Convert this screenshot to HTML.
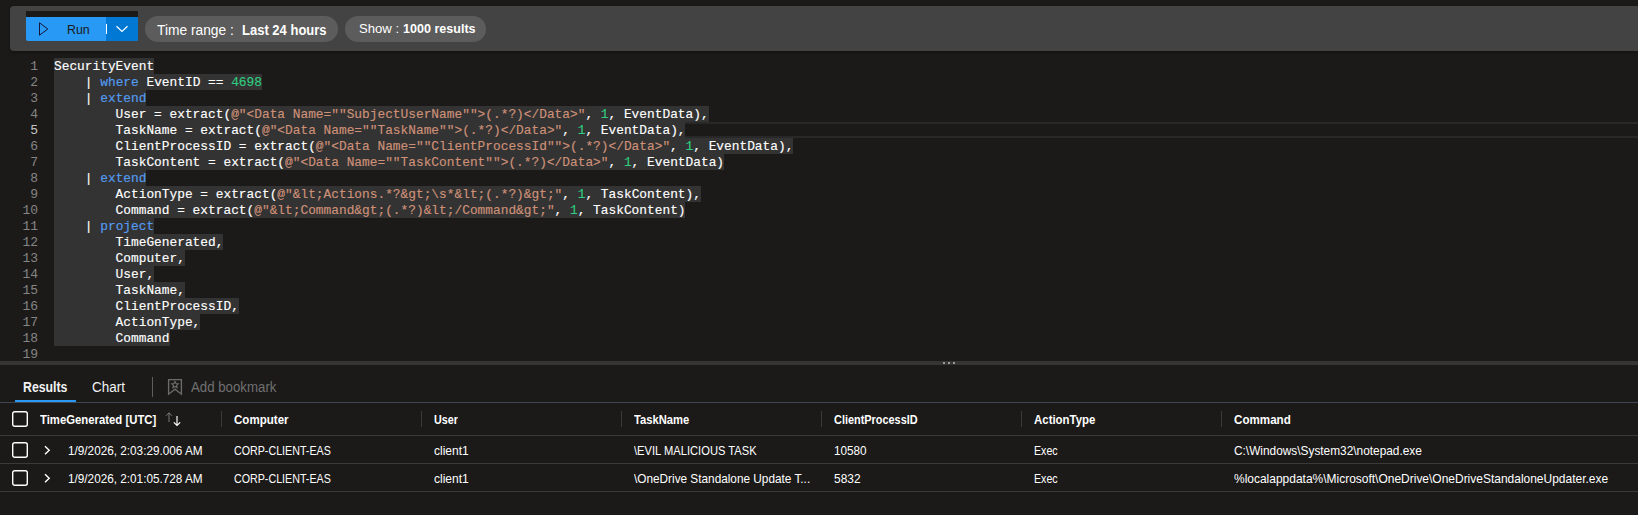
<!DOCTYPE html><html><head><meta charset="utf-8"><style>
html,body{margin:0;padding:0;width:1638px;height:515px;overflow:hidden;background:#1b1a19;}
.t{position:absolute;white-space:pre;line-height:1;font-family:"Liberation Sans",sans-serif;}
.ln{position:absolute;left:0;width:38px;text-align:right;height:16px;line-height:16px;font-family:"Liberation Mono",monospace;font-size:13px;white-space:pre;}
.code{position:absolute;left:54px;height:16px;line-height:16px;font-family:"Liberation Mono",monospace;font-size:13px;white-space:pre;transform:scaleX(0.98718);transform-origin:0 0;-webkit-text-stroke:0.15px currentColor;}
</style></head><body><div style="position:absolute;left:10px;top:6px;width:1628px;height:45px;background:#434343;border-radius:4px 0 0 4px;box-shadow:0 1.5px 3px rgba(0,0,0,0.25);"></div>
<div style="position:absolute;left:26px;top:11px;width:112px;height:6px;background:#1b1a19;"></div>
<div style="position:absolute;left:26px;top:17px;width:112px;height:24px;background:#2899f5;border-radius:0 0 2px 2px;"></div>
<div style="position:absolute;left:106px;top:17px;width:32px;height:24px;background:#0078d4;border-radius:0 0 2px 0;"></div>
<svg style="position:absolute;left:0;top:0" width="160" height="50"><path d="M39.5 22.8 L47.8 29 L39.5 35.2 Z" fill="none" stroke="#15163a" stroke-width="1.0"/><path d="M116.5 26.2 L122 31.5 L127.5 26.2" fill="none" stroke="#fff" stroke-width="1.2"/></svg>
<div style="position:absolute;left:106px;top:24px;width:1px;height:10px;background:#ffffff;"></div>
<div class="t" id="t0" style="left:67.05px;top:23.00px;font-size:13px;font-weight:400;color:#1b1a19;transform:scaleX(0.9545);transform-origin:0 0;">Run</div>
<div style="position:absolute;left:145px;top:16px;width:193px;height:26px;background:#5c5c5c;border-radius:13px;"></div>
<div class="t" id="t1" style="left:157.19px;top:22.95px;font-size:14px;font-weight:400;color:#fff;transform:scaleX(0.9835);transform-origin:0 0;">Time range :</div>
<div class="t" id="t2" style="left:242.06px;top:22.95px;font-size:14px;font-weight:700;color:#fff;transform:scaleX(0.9290);transform-origin:0 0;">Last 24 hours</div>
<div style="position:absolute;left:345px;top:16px;width:141px;height:26px;background:#5c5c5c;border-radius:13px;"></div>
<div class="t" id="t3" style="left:359.40px;top:22.30px;font-size:13px;font-weight:400;color:#fff;transform:scaleX(1.0078);transform-origin:0 0;">Show :</div>
<div class="t" id="t4" style="left:403.40px;top:22.30px;font-size:13px;font-weight:700;color:#fff;transform:scaleX(0.9653);transform-origin:0 0;">1000 results</div>
<div style="position:absolute;left:54px;top:122px;width:1584px;height:16px;background:transparent;box-sizing:border-box;border-top:2px solid #282828;border-bottom:2px solid #282828;"></div>
<div style="position:absolute;left:54px;top:58px;width:100.1px;height:16px;background:#333333;"></div>
<div style="position:absolute;left:54px;top:74px;width:207.9px;height:16px;background:#333333;"></div>
<div style="position:absolute;left:54px;top:90px;width:92.4px;height:16px;background:#333333;"></div>
<div style="position:absolute;left:54px;top:106px;width:654.5px;height:16px;background:#333333;"></div>
<div style="position:absolute;left:54px;top:122px;width:631.4px;height:16px;background:#333333;"></div>
<div style="position:absolute;left:54px;top:138px;width:739.2px;height:16px;background:#333333;"></div>
<div style="position:absolute;left:54px;top:154px;width:669.9px;height:16px;background:#333333;"></div>
<div style="position:absolute;left:54px;top:170px;width:92.4px;height:16px;background:#333333;"></div>
<div style="position:absolute;left:54px;top:186px;width:646.8px;height:16px;background:#333333;"></div>
<div style="position:absolute;left:54px;top:202px;width:631.4px;height:16px;background:#333333;"></div>
<div style="position:absolute;left:54px;top:218px;width:100.1px;height:16px;background:#333333;"></div>
<div style="position:absolute;left:54px;top:234px;width:169.4px;height:16px;background:#333333;"></div>
<div style="position:absolute;left:54px;top:250px;width:130.9px;height:16px;background:#333333;"></div>
<div style="position:absolute;left:54px;top:266px;width:100.1px;height:16px;background:#333333;"></div>
<div style="position:absolute;left:54px;top:282px;width:130.9px;height:16px;background:#333333;"></div>
<div style="position:absolute;left:54px;top:298px;width:184.8px;height:16px;background:#333333;"></div>
<div style="position:absolute;left:54px;top:314px;width:146.3px;height:16px;background:#333333;"></div>
<div style="position:absolute;left:54px;top:330px;width:115.5px;height:16px;background:#333333;"></div>
<div class="ln" style="top:59px;color:#858585">1</div>
<div class="code" style="top:59px"><span style="color:#ffffff">SecurityEvent</span></div>
<div class="ln" style="top:75px;color:#858585">2</div>
<div class="code" style="top:75px"><span style="color:#ffffff">    </span><span style="color:#ffffff">| </span><span style="color:#539cf2">where</span><span style="color:#ffffff"> EventID == </span><span style="color:#2fcd7f">4698</span></div>
<div class="ln" style="top:91px;color:#858585">3</div>
<div class="code" style="top:91px"><span style="color:#ffffff">    </span><span style="color:#ffffff">| </span><span style="color:#539cf2">extend</span></div>
<div class="ln" style="top:107px;color:#858585">4</div>
<div class="code" style="top:107px"><span style="color:#ffffff">        User = extract(</span><span style="color:#ce9178">@&quot;&lt;Data Name=&quot;&quot;SubjectUserName&quot;&quot;&gt;(.*?)&lt;/Data&gt;&quot;</span><span style="color:#ffffff">, </span><span style="color:#2fcd7f">1</span><span style="color:#ffffff">, EventData),</span></div>
<div class="ln" style="top:123px;color:#c6c6c6">5</div>
<div class="code" style="top:123px"><span style="color:#ffffff">        TaskName = extract(</span><span style="color:#ce9178">@&quot;&lt;Data Name=&quot;&quot;TaskName&quot;&quot;&gt;(.*?)&lt;/Data&gt;&quot;</span><span style="color:#ffffff">, </span><span style="color:#2fcd7f">1</span><span style="color:#ffffff">, EventData),</span></div>
<div class="ln" style="top:139px;color:#858585">6</div>
<div class="code" style="top:139px"><span style="color:#ffffff">        ClientProcessID = extract(</span><span style="color:#ce9178">@&quot;&lt;Data Name=&quot;&quot;ClientProcessId&quot;&quot;&gt;(.*?)&lt;/Data&gt;&quot;</span><span style="color:#ffffff">, </span><span style="color:#2fcd7f">1</span><span style="color:#ffffff">, EventData),</span></div>
<div class="ln" style="top:155px;color:#858585">7</div>
<div class="code" style="top:155px"><span style="color:#ffffff">        TaskContent = extract(</span><span style="color:#ce9178">@&quot;&lt;Data Name=&quot;&quot;TaskContent&quot;&quot;&gt;(.*?)&lt;/Data&gt;&quot;</span><span style="color:#ffffff">, </span><span style="color:#2fcd7f">1</span><span style="color:#ffffff">, EventData)</span></div>
<div class="ln" style="top:171px;color:#858585">8</div>
<div class="code" style="top:171px"><span style="color:#ffffff">    </span><span style="color:#ffffff">| </span><span style="color:#539cf2">extend</span></div>
<div class="ln" style="top:187px;color:#858585">9</div>
<div class="code" style="top:187px"><span style="color:#ffffff">        ActionType = extract(</span><span style="color:#ce9178">@&quot;&amp;lt;Actions.*?&amp;gt;\s*&amp;lt;(.*?)&amp;gt;&quot;</span><span style="color:#ffffff">, </span><span style="color:#2fcd7f">1</span><span style="color:#ffffff">, TaskContent),</span></div>
<div class="ln" style="top:203px;color:#858585">10</div>
<div class="code" style="top:203px"><span style="color:#ffffff">        Command = extract(</span><span style="color:#ce9178">@&quot;&amp;lt;Command&amp;gt;(.*?)&amp;lt;/Command&amp;gt;&quot;</span><span style="color:#ffffff">, </span><span style="color:#2fcd7f">1</span><span style="color:#ffffff">, TaskContent)</span></div>
<div class="ln" style="top:219px;color:#858585">11</div>
<div class="code" style="top:219px"><span style="color:#ffffff">    </span><span style="color:#ffffff">| </span><span style="color:#539cf2">project</span></div>
<div class="ln" style="top:235px;color:#858585">12</div>
<div class="code" style="top:235px"><span style="color:#ffffff">        TimeGenerated,</span></div>
<div class="ln" style="top:251px;color:#858585">13</div>
<div class="code" style="top:251px"><span style="color:#ffffff">        Computer,</span></div>
<div class="ln" style="top:267px;color:#858585">14</div>
<div class="code" style="top:267px"><span style="color:#ffffff">        User,</span></div>
<div class="ln" style="top:283px;color:#858585">15</div>
<div class="code" style="top:283px"><span style="color:#ffffff">        TaskName,</span></div>
<div class="ln" style="top:299px;color:#858585">16</div>
<div class="code" style="top:299px"><span style="color:#ffffff">        ClientProcessID,</span></div>
<div class="ln" style="top:315px;color:#858585">17</div>
<div class="code" style="top:315px"><span style="color:#ffffff">        ActionType,</span></div>
<div class="ln" style="top:331px;color:#858585">18</div>
<div class="code" style="top:331px"><span style="color:#ffffff">        Command</span></div>
<div class="ln" style="top:347px;color:#858585">19</div>
<div class="code" style="top:347px"></div>
<div style="position:absolute;left:0px;top:361px;width:1638px;height:4px;background:#353535;"></div>
<div style="position:absolute;left:943px;top:362px;width:2px;height:2px;background:#9a9a9a;"></div>
<div style="position:absolute;left:948px;top:362px;width:2px;height:2px;background:#9a9a9a;"></div>
<div style="position:absolute;left:953px;top:362px;width:2px;height:2px;background:#9a9a9a;"></div>
<div class="t" id="t5" style="left:23.08px;top:379.75px;font-size:14px;font-weight:700;color:#f2f2f2;transform:scaleX(0.8789);transform-origin:0 0;">Results</div>
<div class="t" id="t6" style="left:92.21px;top:379.75px;font-size:14px;font-weight:400;color:#f2f2f2;transform:scaleX(0.9601);transform-origin:0 0;">Chart</div>
<div style="position:absolute;left:152px;top:377px;width:1px;height:20px;background:#5e5e5e;"></div>
<svg style="position:absolute;left:160px;top:372px" width="30" height="30"><path d="M8.6 7.6 H21.4 V22.2 L15 17.2 L8.6 22.2 Z" fill="none" stroke="#6b6b6b" stroke-width="1.35"/><path d="M15 9.4 L16 11.5 L18.3 11.7 L16.6 13.3 L17.1 15.6 L15 14.4 L12.9 15.6 L13.4 13.3 L11.7 11.7 L14 11.5 Z" fill="none" stroke="#6b6b6b" stroke-width="1.15"/></svg>
<div class="t" id="t7" style="left:190.79px;top:379.85px;font-size:14px;font-weight:400;color:#707070;transform:scaleX(0.9463);transform-origin:0 0;">Add bookmark</div>
<div style="position:absolute;left:15px;top:400px;width:61px;height:2px;background:#2899f5;"></div>
<div style="position:absolute;left:0px;top:402px;width:1638px;height:1px;background:#3d4652;"></div>
<svg style="position:absolute;left:12px;top:411px" width="16" height="16"><rect x="0.7" y="0.7" width="14.6" height="14.6" rx="2" fill="none" stroke="#ffffff" stroke-width="1.4"/></svg>
<div class="t" id="t8" style="left:40.00px;top:413.30px;font-size:13px;font-weight:700;color:#fff;transform:scaleX(0.8715);transform-origin:0 0;">TimeGenerated [UTC]</div>
<svg style="position:absolute;left:160px;top:408px" width="26" height="22"><path d="M9 14 V4.8 M6 7.8 L9 4.8 L12 7.8" fill="none" stroke="#8a8a8a" stroke-width="0.85"/><path d="M17 8 V17.5 M13.8 14.3 L17 17.5 L20.2 14.3" fill="none" stroke="#fff" stroke-width="1.15"/></svg>
<div style="position:absolute;left:221px;top:411px;width:1px;height:16px;background:#3a3a3a;"></div>
<div class="t" id="t9" style="left:234.00px;top:413.30px;font-size:13px;font-weight:700;color:#fff;transform:scaleX(0.8889);transform-origin:0 0;">Computer</div>
<div style="position:absolute;left:421px;top:411px;width:1px;height:16px;background:#3a3a3a;"></div>
<div class="t" id="t10" style="left:434.00px;top:413.30px;font-size:13px;font-weight:700;color:#fff;transform:scaleX(0.8276);transform-origin:0 0;">User</div>
<div style="position:absolute;left:621px;top:411px;width:1px;height:16px;background:#3a3a3a;"></div>
<div class="t" id="t11" style="left:634.00px;top:413.30px;font-size:13px;font-weight:700;color:#fff;transform:scaleX(0.8610);transform-origin:0 0;">TaskName</div>
<div style="position:absolute;left:821px;top:411px;width:1px;height:16px;background:#3a3a3a;"></div>
<div class="t" id="t12" style="left:834.00px;top:413.30px;font-size:13px;font-weight:700;color:#fff;transform:scaleX(0.8390);transform-origin:0 0;">ClientProcessID</div>
<div style="position:absolute;left:1021px;top:411px;width:1px;height:16px;background:#3a3a3a;"></div>
<div class="t" id="t13" style="left:1034.00px;top:413.30px;font-size:13px;font-weight:700;color:#fff;transform:scaleX(0.8801);transform-origin:0 0;">ActionType</div>
<div style="position:absolute;left:1221px;top:411px;width:1px;height:16px;background:#3a3a3a;"></div>
<div class="t" id="t14" style="left:1234.00px;top:413.30px;font-size:13px;font-weight:700;color:#fff;transform:scaleX(0.8937);transform-origin:0 0;">Command</div>
<div style="position:absolute;left:0px;top:435px;width:1638px;height:1px;background:#3a3a3a;"></div>
<svg style="position:absolute;left:12px;top:442px" width="16" height="16"><rect x="0.7" y="0.7" width="14.6" height="14.6" rx="2" fill="none" stroke="#ffffff" stroke-width="1.4"/></svg>
<svg style="position:absolute;left:40px;top:442px" width="16" height="16"><path d="M5 4.3 L9.2 8.3 L5 12.3" fill="none" stroke="#ffffff" stroke-width="1.4"/></svg>
<div class="t" id="t15" style="left:68.44px;top:444.00px;font-size:13px;font-weight:400;color:#fff;transform:scaleX(0.9041);transform-origin:0 0;">1/9/2026, 2:03:29.006 AM</div>
<div class="t" id="t16" style="left:234.00px;top:444.00px;font-size:13px;font-weight:400;color:#fff;transform:scaleX(0.8220);transform-origin:0 0;">CORP-CLIENT-EAS</div>
<div class="t" id="t17" style="left:434.00px;top:444.00px;font-size:13px;font-weight:400;color:#fff;transform:scaleX(0.9246);transform-origin:0 0;">client1</div>
<div class="t" id="t18" style="left:634.00px;top:444.00px;font-size:13px;font-weight:400;color:#fff;transform:scaleX(0.8587);transform-origin:0 0;">\EVIL MALICIOUS TASK</div>
<div class="t" id="t19" style="left:834.07px;top:444.00px;font-size:13px;font-weight:400;color:#fff;transform:scaleX(0.9015);transform-origin:0 0;">10580</div>
<div class="t" id="t20" style="left:1034.15px;top:444.00px;font-size:13px;font-weight:400;color:#fff;transform:scaleX(0.8165);transform-origin:0 0;">Exec</div>
<div class="t" id="t21" style="left:1234.00px;top:444.00px;font-size:13px;font-weight:400;color:#fff;transform:scaleX(0.9122);transform-origin:0 0;">C:\Windows\System32\notepad.exe</div>
<div style="position:absolute;left:0px;top:463px;width:1638px;height:1px;background:#3a3a3a;"></div>
<svg style="position:absolute;left:12px;top:470px" width="16" height="16"><rect x="0.7" y="0.7" width="14.6" height="14.6" rx="2" fill="none" stroke="#ffffff" stroke-width="1.4"/></svg>
<svg style="position:absolute;left:40px;top:470px" width="16" height="16"><path d="M5 4.3 L9.2 8.3 L5 12.3" fill="none" stroke="#ffffff" stroke-width="1.4"/></svg>
<div class="t" id="t22" style="left:68.44px;top:472.00px;font-size:13px;font-weight:400;color:#fff;transform:scaleX(0.9041);transform-origin:0 0;">1/9/2026, 2:01:05.728 AM</div>
<div class="t" id="t23" style="left:234.00px;top:472.00px;font-size:13px;font-weight:400;color:#fff;transform:scaleX(0.8220);transform-origin:0 0;">CORP-CLIENT-EAS</div>
<div class="t" id="t24" style="left:434.00px;top:472.00px;font-size:13px;font-weight:400;color:#fff;transform:scaleX(0.9246);transform-origin:0 0;">client1</div>
<div class="t" id="t25" style="left:634.00px;top:472.00px;font-size:13px;font-weight:400;color:#fff;transform:scaleX(0.9073);transform-origin:0 0;">\OneDrive Standalone Update T...</div>
<div class="t" id="t26" style="left:834.00px;top:472.00px;font-size:13px;font-weight:400;color:#fff;transform:scaleX(0.9173);transform-origin:0 0;">5832</div>
<div class="t" id="t27" style="left:1034.15px;top:472.00px;font-size:13px;font-weight:400;color:#fff;transform:scaleX(0.8165);transform-origin:0 0;">Exec</div>
<div class="t" id="t28" style="left:1234.00px;top:472.00px;font-size:13px;font-weight:400;color:#fff;transform:scaleX(0.9212);transform-origin:0 0;">%localappdata%\Microsoft\OneDrive\OneDriveStandaloneUpdater.exe</div>
<div style="position:absolute;left:0px;top:491px;width:1638px;height:1px;background:#3a3a3a;"></div></body></html>
